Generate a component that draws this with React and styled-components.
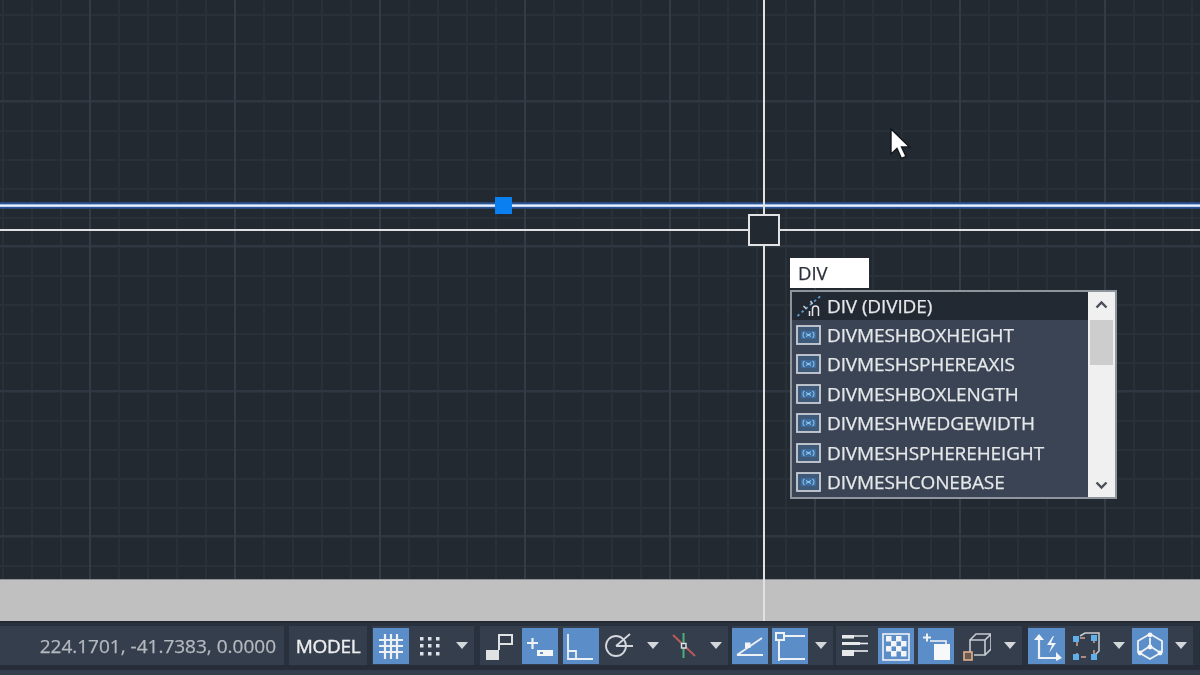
import React from "react";
import styled, { createGlobalStyle } from "styled-components";

const Global = createGlobalStyle`
  html, body { margin: 0; padding: 0; background: #212830; }
  #root { width: 1200px; height: 675px; overflow: hidden; }
  * { box-sizing: border-box; }
`;

const Page = styled.div`
  width: 1200px; height: 675px; display: flex; flex-direction: column;
  font-family: "Open Sans", "Noto Sans", sans-serif;
  filter: blur(0.4px);
`;
const Workspace = styled.div`
  position: relative; flex: 0 0 621px; display: flex; flex-direction: column; overflow: hidden;
`;
const Canvas = styled.div`
  flex: 1;
  background-color: #222931;
  background-image:
    linear-gradient(90deg, #333b47 0 2px, transparent 2px),
    linear-gradient(180deg, #2f3743 0 2px, transparent 2px),
    linear-gradient(90deg, #283038 0 1.5px, transparent 1.5px),
    linear-gradient(180deg, #283038 0 1.5px, transparent 1.5px);
  background-size: 145px 100%, 100% 145px, 29px 100%, 100% 29px;
  background-position: 89px 0, 0 100px, 2px 0, 0 14px;
`;
const GreyBand = styled.div`
  flex: 0 0 42px; background: #c0c0c1; border-top: 1px solid #8f9295;
`;
const HLine = styled.div`
  position: absolute; left: 0; right: 0; top: ${p => p.$y}px; height: 2px; background: #dfe1e3;
`;
const SelectedLine = styled.div`
  position: absolute; left: 0; right: 0; top: 202px; height: 7px;
  background: linear-gradient(180deg, #25406c, #2f5ea8 30%, #eef4ff 40%, #eef4ff 62%, #2f5ea8 72%, #25406c);
`;
const VLine = styled.div`
  position: absolute; top: 0; bottom: 0; left: 763px; width: 2px; background: #dfe1e3;
`;
const Grip = styled.div`
  position: absolute; left: 495px; top: 197px; width: 17px; height: 17px; background: #0a80f0;
`;
const PickBox = styled.div`
  position: absolute; left: 748px; top: 214px; width: 32px; height: 32px;
  border: 2px solid #e2e3e4; background: #222931;
`;
const CursorWrap = styled.svg`
  position: absolute; left: 887px; top: 127px; width: 24px; height: 34px;
`;
const CmdInput = styled.div`
  position: absolute; left: 790px; top: 258px; width: 79px; height: 30px; background: #fff;
  color: #2a2f3c; font-size: 18.5px; -webkit-text-stroke: 0.25px #2a2f3c; line-height: 29px; padding-left: 8px;
`;
const Suggest = styled.div`
  position: absolute; left: 790px; top: 290px; width: 327px; height: 209px;
  border: 2px solid #8f959c; display: flex; background: #3a4454;
`;
const SuggestList = styled.div`
  flex: 1; display: flex; flex-direction: column;
`;
const SuggestRow = styled.div`
  height: ${p => (p.$active ? 28 : 29.5)}px; flex: none; display: flex; align-items: center;
  gap: ${p => (p.$active ? 4 : 5)}px; padding-left: 4px;
  padding-bottom: ${p => (p.$active ? 1 : 0)}px;
  background: ${p => (p.$active ? "#232932" : "#3a4454")};
  color: #e6e8ea; font-size: 19px; -webkit-text-stroke: 0.25px #e6e8ea; letter-spacing: -0.12px; white-space: nowrap;
`;
const ScrollBar = styled.div`
  flex: 0 0 27px; background: #f0f0f0; display: flex; flex-direction: column; align-items: center; position: relative;
`;
const ScrollThumb = styled.div`
  position: absolute; left: 2px; right: 2px; top: 28px; height: 45px; background: #cdcdcd;
`;
const ScrollArrow = styled.svg`
  position: absolute; left: 7px; ${p => (p.$down ? "bottom: 7px" : "top: 8px")}; width: 13px; height: 9px;
`;

const StatusBar = styled.div`
  flex: 1; display: flex; align-items: flex-start; padding-top: 5px;
  background: linear-gradient(180deg, #22272f 0, #22272f 1px, #2a313e 2px, #2a313e 44px, #262c38 44px, #262c38 49px, #333c4c 49px);
`;
const Chip = styled.div`
  height: 39px; margin-left: ${p => p.$ml || 0}px; width: ${p => p.$w}px; background: #353e4d;
  display: flex; align-items: center; justify-content: ${p => (p.$center ? "center" : "flex-end")};
  padding-right: ${p => (p.$center ? 0 : 8)}px;
  color: ${p => (p.$bright ? "#eceef0" : "#b5b9bf")}; font-size: 19px;
  -webkit-text-stroke: ${p => (p.$bright ? 0.4 : 0.25)}px ${p => (p.$bright ? "#eceef0" : "#b5b9bf")};
  letter-spacing: ${p => p.$ls || 0}px; white-space: nowrap;
`;
const Group = styled.div`
  height: 39px; margin-left: ${p => p.$ml || 0}px; background: #353e4d; display: flex; align-items: center;
  padding-left: ${p => p.$pl || 0}px;
`;
const Slot = styled.div`
  width: ${p => p.$w || 36}px; height: 36px; margin-left: ${p => p.$ml || 0}px; flex: none;
  display: flex; align-items: center; justify-content: center;
  background: ${p => (p.$on ? "#5b8ec9" : "transparent")};
`;
const IconSvg = styled.svg`
  width: 30px; height: 30px; display: block; fill: none; stroke: #eef1f4; stroke-width: 2;
`;
const CaretMark = styled.div`
  width: 0; height: 0; border-left: 6.5px solid transparent; border-right: 6.5px solid transparent;
  border-top: 7px solid #d3d6da;
`;

const Icon = ({ children }) => <IconSvg viewBox="0 0 30 30">{children}</IconSvg>;
const Caret = ({ w = 24 }) => <Slot $w={w}><CaretMark /></Slot>;

const GridIcon = () => <Icon>
  <path d="M3 9h24M3 15h24M3 21h24M9 3v25M15 3v25M21 3v25" strokeWidth="2.2" />
</Icon>;
const DotsIcon = () => <Icon>
  <g fill="#dfe2e6" stroke="none">
    {[6, 13, 21].map(y => [5, 13, 21].map(x => <rect key={`${x}-${y}`} x={x} y={y} width="3.5" height="3.5" />))}
  </g>
</Icon>;
const SnapIcon = () => <Icon>
  <path d="M2 19h13v10H2z" fill="#dfe1e3" stroke="none" />
  <path d="M15 19V4h13v9H15" stroke="#dfe1e3" />
</Icon>;
const PlusMinusIcon = () => <Icon>
  <path d="M2 12h11M7.5 7v11" strokeWidth="2.2" />
  <path d="M12 19h16v6H12z" fill="#f3f5f7" stroke="none" />
  <path d="M15 22h3" stroke="#5b8ec9" />
</Icon>;
const OrthoIcon = () => <Icon>
  <path d="M2 3v25h25M2 20h8v8" strokeWidth="1.8" />
</Icon>;
const PolarIcon = () => <Icon>
  <circle cx="11" cy="15" r="10" stroke="#d4d7db" strokeWidth="1.8" />
  <path d="M11 15L25 3M11 15h17" stroke="#d4d7db" strokeWidth="1.8" />
</Icon>;
const OsnapIcon = () => <Icon>
  <path d="M4 4l22 21" stroke="#b85b5b" strokeWidth="2" />
  <path d="M14.5 2v25" stroke="#4caf7a" strokeWidth="2" />
  <rect x="12.5" y="12.5" width="4.5" height="4.5" fill="#353e4d" stroke="#e2e4e6" strokeWidth="1.4" />
</Icon>;
const AngleIcon = () => <Icon>
  <path d="M2 24h26M2 24L27 7" strokeWidth="1.8" />
  <rect x="10" y="11.5" width="5.5" height="5.5" fill="#f0f2f4" stroke="none" />
</Icon>;
const RectIcon = () => <Icon>
  <path d="M9 5h21M4 10v20M4 28h26" strokeWidth="2" />
  <rect x="1" y="2" width="8" height="7" strokeWidth="2" />
</Icon>;
const WeightIcon = () => <Icon>
  <path d="M2 4h12v3.5H2z" fill="#e6e8ea" stroke="none" />
  <path d="M14 5h14" strokeWidth="1.4" />
  <path d="M2 11h18v3H2z" fill="#e6e8ea" stroke="none" />
  <path d="M20 12.5h8" strokeWidth="1.6" />
  <path d="M2 19h12v6H2z" fill="#e6e8ea" stroke="none" />
  <path d="M14 20h14" strokeWidth="1.6" />
</Icon>;
const CheckerIcon = () => <Icon>
  <rect x="2" y="3" width="26" height="26" strokeWidth="1.6" />
  <g fill="#f3f5f7" stroke="none">
    {[5, 10, 15, 20].map((y, r) => [5, 10, 15, 20].map((x, c) => (r + c) % 2 === 0
      ? <rect key={`${x}-${y}`} x={x} y={y} width="5.5" height="5.5" /> : null))}
  </g>
</Icon>;
const SelectIcon = () => <Icon>
  <path d="M2 6.5h8M6 2.5v8" strokeWidth="2" />
  <path d="M9 10h16v14" stroke="#f3f5f7" strokeWidth="1.6" />
  <rect x="13" y="13" width="16" height="16" fill="#f7f8f9" stroke="none" />
</Icon>;
const CubeIcon = () => <Icon>
  <path d="M9 21V9h15v15H13M9 9l6-6h15v15l-6 6M24 9l6-6" stroke="#c8ccd1" strokeWidth="1.6" />
  <rect x="3" y="21" width="8" height="8" fill="#6b5a50" stroke="#e0ae8c" strokeWidth="1.6" />
</Icon>;
const UcsIcon = () => <Icon>
  <path d="M7 5v22h20" strokeWidth="2.2" />
  <path d="M2 9l5-6 5 6zM24 21l6 6-6 3z" fill="#f3f5f7" stroke="none" />
  <path d="M21 5l-6 9h5l-3 8 7-10h-5l3-7z" fill="#f3f5f7" stroke="none" />
</Icon>;
const GizmoBoxIcon = () => <Icon>
  <path d="M9 5l5-3h14v18l-4 4" stroke="#c8ccd1" strokeWidth="1.5" />
  <path d="M9 7h14M23 7v16M6 10v13M10 26h12" stroke="#d2a592" strokeWidth="1.5" strokeDasharray="5 7" />
  <g fill="#5fb0ea" stroke="none">
    <rect x="2" y="5" width="6" height="6" /><rect x="20" y="4" width="6" height="6" />
    <rect x="2" y="23" width="6" height="6" /><rect x="20" y="23" width="6" height="6" />
  </g>
</Icon>;
const ViewCubeIcon = () => <Icon>
  <path d="M15 3L27 10v11L15 28 3 21V10zM15 7v8M15 15l-9 6M15 15l9 6" strokeWidth="1.8" />
  <circle cx="15" cy="4" r="2.4" fill="#f3f5f7" stroke="none" />
  <circle cx="15" cy="16" r="2.4" fill="#f3f5f7" stroke="none" />
  <circle cx="5" cy="22" r="2.4" fill="#f3f5f7" stroke="none" />
  <circle cx="25" cy="22" r="2.4" fill="#f3f5f7" stroke="none" />
</Icon>;

const RowSvg = styled.svg`
  width: 26px; height: 22px; flex: none; display: block;
`;
const VarIcon = () => <RowSvg viewBox="0 0 26 22">
  <rect x="1" y="2" width="23" height="18" fill="#3f5a78" stroke="#c9ced4" strokeWidth="1.8" />
  <rect x="5" y="7" width="15" height="8" fill="#3f6a9c" />
  <path d="M8.5 8c-2 1-2 5 0 6M16.5 8c2 1 2 5 0 6M10 9.5l5 3M15 9.5l-5 3" fill="none" stroke="#86c4ee" strokeWidth="1.1" />
</RowSvg>;
const DivideIcon = () => <RowSvg viewBox="0 0 26 22" style={{ width: 27 }}>
  <path d="M1 21L24 1" stroke="#5b9fd0" strokeWidth="1.8" strokeDasharray="2.5 3" fill="none" />
  <path d="M7 11l3 3M14 6l2 3" stroke="#c9ced4" strokeWidth="1.6" fill="none" />
  <path d="M16 21v-7c0-4 6-4 6 0v7M13 16v5" stroke="#e4e6e8" strokeWidth="1.5" fill="none" />
</RowSvg>;

const rows = ["DIVMESHBOXHEIGHT", "DIVMESHSPHEREAXIS", "DIVMESHBOXLENGTH", "DIVMESHWEDGEWIDTH", "DIVMESHSPHEREHEIGHT", "DIVMESHCONEBASE"];

export default function App() {
  return (
    <Page>
      <Global />
      <Workspace>
        <Canvas />
        <GreyBand />
        <HLine $y={229} />
        <SelectedLine />
        <VLine />
        <Grip />
        <PickBox />
        <CursorWrap viewBox="0 0 24 34">
          <path d="M4 2v25l6-5.5 4.5 10 4.5-2-4.5-9.5h8z" fill="#fff" stroke="#14181d" strokeWidth="1.4" />
        </CursorWrap>
        <CmdInput>DIV</CmdInput>
        <Suggest>
          <SuggestList>
            <SuggestRow $active><DivideIcon />DIV (DIVIDE)</SuggestRow>
            {rows.map(r => <SuggestRow key={r}><VarIcon />{r}</SuggestRow>)}
          </SuggestList>
          <ScrollBar>
            <ScrollThumb />
            <ScrollArrow viewBox="0 0 13 9"><path d="M1.5 7.5l5-5 5 5" fill="none" stroke="#4a4f57" strokeWidth="2.4" /></ScrollArrow>
            <ScrollArrow $down viewBox="0 0 13 9"><path d="M1.5 1.5l5 5 5-5" fill="none" stroke="#4a4f57" strokeWidth="2.4" /></ScrollArrow>
          </ScrollBar>
        </Suggest>
      </Workspace>
      <StatusBar>
        <Chip $w={284} $ls={0}>224.1701, -41.7383, 0.0000</Chip>
        <Chip $w={78} $ml={5} $center $bright $ls={-0.3}>MODEL</Chip>
        <Group $ml={5} $pl={1}>
          <Slot $on><GridIcon /></Slot>
          <Slot $w={41}><DotsIcon /></Slot>
          <Caret />
        </Group>
        <Group $ml={6}>
          <Slot $w={38}><SnapIcon /></Slot>
          <Slot $on $ml={4}><PlusMinusIcon /></Slot>
          <Slot $on $ml={5}><OrthoIcon /></Slot>
          <Slot $w={42}><PolarIcon /></Slot>
          <Caret w={23} />
          <Slot $w={40}><OsnapIcon /></Slot>
          <Caret />
        </Group>
        <Group $ml={4}>
          <Slot $on><AngleIcon /></Slot>
          <Slot $on $ml={4}><RectIcon /></Slot>
          <Caret w={25} />
        </Group>
        <Group $ml={3}>
          <Slot $w={38}><WeightIcon /></Slot>
          <Slot $on $ml={4}><CheckerIcon /></Slot>
          <Slot $on $ml={4}><SelectIcon /></Slot>
          <Slot $w={44}><CubeIcon /></Slot>
          <Caret />
        </Group>
        <Group $ml={6}>
          <Slot $on $w={37}><UcsIcon /></Slot>
          <Slot $w={42}><GizmoBoxIcon /></Slot>
          <Caret w={23} />
          <Slot $on $ml={2}><ViewCubeIcon /></Slot>
          <Caret w={25} />
        </Group>
      </StatusBar>
    </Page>
  );
}
